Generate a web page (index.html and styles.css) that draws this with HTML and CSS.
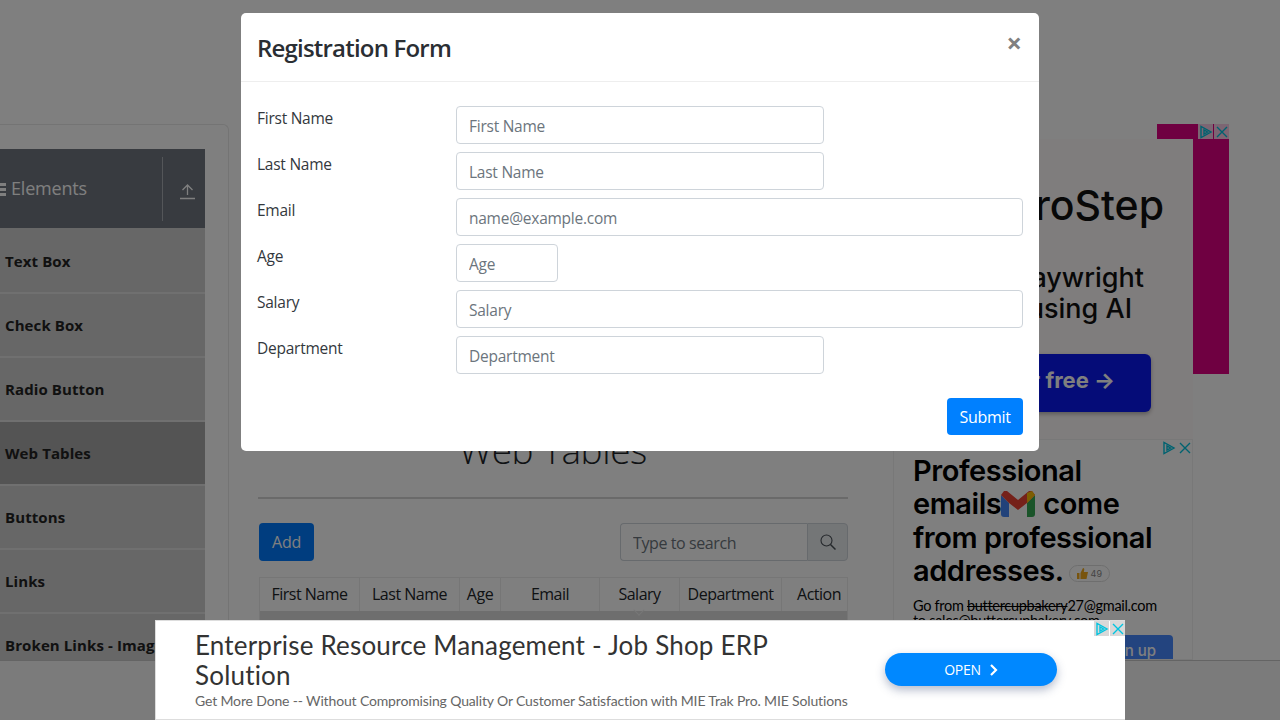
FILE: index.html
```html
<!DOCTYPE html>
<html lang="en">
<head>
    <meta charset="UTF-8">
    <title>Web Tables</title>
    <link rel="stylesheet" href="styles.css">
</head>
<body>
    <div class="page">
        <aside class="sidebar">
            <div class="group-header">
                <span class="group-title">
                    <span class="burger"><i></i><i></i><i></i></span>
                    Elements
                </span>
                <span class="group-toggle">
                    <svg width="17" height="17" viewBox="0 0 17 17" fill="none" stroke="currentColor" stroke-width="1.3">
                        <path d="M8.5 12V2M3.5 7l5-5 5 5M1 15.5h15"/>
                    </svg>
                </span>
            </div>
            <ul class="menu">
                <li>Text Box</li>
                <li>Check Box</li>
                <li>Radio Button</li>
                <li class="active">Web Tables</li>
                <li>Buttons</li>
                <li>Links</li>
                <li>Broken Links - Images</li>
            </ul>
        </aside>

        <main class="content">
            <h1 class="page-title">Web Tables</h1>
            <hr class="rule">
            <div class="toolbar">
                <button class="btn-add" type="button">Add</button>
                <div class="search">
                    <input class="search-input" type="text" placeholder="Type to search">
                    <span class="search-addon">
                        <svg width="16" height="16" viewBox="0 0 16 16" fill="none" stroke="currentColor" stroke-width="1.1">
                            <circle cx="6.5" cy="6.5" r="5.5"/>
                            <path d="M10.5 10.5l5 5" stroke-width="1.5"/>
                        </svg>
                    </span>
                </div>
            </div>
            <div class="table">
                <div class="table-head">
                    <div>First Name</div>
                    <div>Last Name</div>
                    <div>Age</div>
                    <div>Email</div>
                    <div class="sorted">Salary</div>
                    <div>Department</div>
                    <div class="action">Action</div>
                </div>
                <div class="table-row"></div>
            </div>
        </main>

        <section class="ads">
            <div class="ad-slot">
                <div class="ad-stripe"></div>
                <div class="ad-marks ad-marks-boxed">
                    <span class="mark"><svg width="14" height="14" viewBox="0 0 14 14" fill="none" stroke="#00c4e0" stroke-width="1.4"><path d="M2 1.5v11l10-5.5zM5 5v4l3.5-2z"/></svg></span>
                    <span class="mark"><svg width="14" height="14" viewBox="0 0 14 14" fill="none" stroke="#00c4e0" stroke-width="1.4"><path d="M2 2l10 10M12 2L2 12"/></svg></span>
                </div>
                <div class="ad-image">
                    <div class="ad-brand">MicroStep</div>
                    <div class="ad-copy">Test Playwright</div>
                    <div class="ad-copy ad-copy-short">flows using AI</div>
                    <div class="ad-cta">Try for free →</div>
                </div>
            </div>
            <div class="ad-mail">
                <div class="ad-marks ad-marks-plain">
                    <span class="mark"><svg width="14" height="14" viewBox="0 0 14 14" fill="none" stroke="#00c4e0" stroke-width="1.4"><path d="M2 1.5v11l10-5.5zM5 5v4l3.5-2z"/></svg></span>
                    <span class="mark"><svg width="14" height="14" viewBox="0 0 14 14" fill="none" stroke="#00c4e0" stroke-width="1.4"><path d="M2 2l10 10M12 2L2 12"/></svg></span>
                </div>
                <p class="mail-headline">
                    Professional<br>
                    emails<svg class="gmail" width="34" height="26" viewBox="0 0 34 26">
                        <path d="M0 4v19a3 3 0 0 0 3 3h5V12z" fill="#4285f4"/>
                        <path d="M34 4v19a3 3 0 0 1-3 3h-5V12z" fill="#34a853"/>
                        <path d="M0 4l8 8 9 7 9-7 8-8-3-4-3 0-11 9L6 0H3z" fill="#ea4335"/>
                        <path d="M26 2l5-2 3 4-8 8z" fill="#fbbc04"/>
                    </svg>come<br>
                    from professional<br>
                    addresses.<span class="likes">
                        <svg width="11" height="11" viewBox="0 0 11 11"><path d="M0 5h2.5v6H0zM3.5 5L6 0c1.200 0 1.500 1 1.200 2L6.800 4H11l-1.500 7h-6z" fill="#f0a81c"/></svg>
                        49
                    </span>
                </p>
                <p class="mail-text">Go from <s>buttercupbakery</s>27@gmail.com<br>to sales@buttercupbakery.com</p>
                <div class="mail-signup">Sign up</div>
            </div>
        </section>
    </div>

    <footer class="footer"></footer>

    <!-- Modal -->
    <div class="overlay">
        <div class="modal">
            <div class="modal-header">
                <h2 class="modal-title">Registration Form</h2>
                <span class="modal-close">×</span>
            </div>
            <form class="modal-body">
                <div class="form-row">
                    <label>First Name</label>
                    <input class="field field-md" type="text" placeholder="First Name">
                </div>
                <div class="form-row">
                    <label>Last Name</label>
                    <input class="field field-md" type="text" placeholder="Last Name">
                </div>
                <div class="form-row">
                    <label>Email</label>
                    <input class="field field-lg" type="text" placeholder="name@example.com">
                </div>
                <div class="form-row">
                    <label>Age</label>
                    <input class="field field-sm" type="text" placeholder="Age">
                </div>
                <div class="form-row">
                    <label>Salary</label>
                    <input class="field field-lg" type="text" placeholder="Salary">
                </div>
                <div class="form-row">
                    <label>Department</label>
                    <input class="field field-md" type="text" placeholder="Department">
                </div>
                <div class="form-actions">
                    <button class="btn-submit" type="button">Submit</button>
                </div>
            </form>
        </div>
    </div>

    <!-- Bottom ad -->
    <div class="bottom-ad">
        <div class="ad-marks ad-marks-light">
            <span class="mark"><svg width="14" height="14" viewBox="0 0 14 14" fill="none" stroke="#00c4e0" stroke-width="1.4"><path d="M2 1.500v11l10-5.500zM5 5v4l3.500-2z"/></svg></span>
            <span class="mark"><svg width="14" height="14" viewBox="0 0 14 14" fill="none" stroke="#00c4e0" stroke-width="1.4"><path d="M2 2l10 10M12 2L2 12"/></svg></span>
        </div>
        <div class="bottom-ad-text">
            <div class="bottom-ad-title">Enterprise Resource Management - Job Shop ERP Solution</div>
            <div class="bottom-ad-sub">Get More Done -- Without Compromising Quality Or Customer Satisfaction with MIE Trak Pro. MIE Solutions</div>
        </div>
        <div class="bottom-ad-open">
            OPEN
            <svg width="9" height="12" viewBox="0 0 9 12" fill="none" stroke="#fff" stroke-width="2.200"><path d="M2 1l5 5-5 5"/></svg>
        </div>
    </div>
</body>
</html>
```

FILE: styles.css
```css
* {
    box-sizing: border-box;
}

body {
    margin: 0;
    height: 720px;
    overflow: hidden;
    display: flex;
    flex-direction: column;
    background: #fff;
    color: #212529;
    font-family: "Open Sans", "Noto Sans", sans-serif;
    font-size: 16px;
}

.page {
    flex: 1;
    min-height: 0;
    overflow: hidden;
    display: flex;
    padding-top: 124px;
}

.footer {
    height: 60px;
    background: #f6f6f6;
    border-top: 1px solid #c8c8c8;
}

/* Left menu */
.sidebar {
    flex: none;
    width: 229px;
    height: 560px;
    padding: 24px 23px 0 0;
    border: 1px solid #e8e8e8;
    border-left: 0;
    border-bottom: 0;
    border-radius: 0 6px 0 0;
}

.group-header {
    height: 81px;
    display: flex;
    align-items: center;
    justify-content: space-between;
    background: #707680;
    color: #fff;
    border-bottom: 2px solid #d0d0d0;
}

.group-title {
    display: flex;
    align-items: center;
    gap: 5px;
    font-size: 18px;
    letter-spacing: -0.2px;
    padding-bottom: 2px;
}

.burger {
    display: flex;
    flex-direction: column;
    gap: 2px;
    width: 6px;
    margin-top: 3px;
}

.burger i {
    height: 3px;
    background: #fff;
}

.group-toggle {
    display: flex;
    align-items: center;
    justify-content: center;
    width: 43px;
    height: 64px;
    border-left: 1px solid #a8acb3;
    padding-top: 6px;
    padding-left: 6px;
}

.menu {
    list-style: none;
    margin: 0;
    padding: 0;
}

.menu li {
    height: 64px;
    padding-left: 5px;
    display: flex;
    align-items: center;
    background: #cecece;
    border-bottom: 2px solid #e0e0e0;
    font-size: 15px;
    font-weight: 700;
    letter-spacing: 0.1px;
    white-space: nowrap;
    overflow: hidden;
    color: #222;
}

.menu li.active {
    background: #a8a8a8;
}

/* Center column */
.content {
    flex: none;
    width: 636px;
    margin-left: 12px;
    padding: 302px 29px 0 17px;
}

.page-title {
    margin: 0;
    height: 48px;
    line-height: 48px;
    text-align: center;
    font-size: 37px;
    font-weight: 300;
    letter-spacing: -0.4px;
}

.rule {
    margin: 23px 0 24px;
    border: 0;
    border-top: 2px solid #d4d4d4;
}

.toolbar {
    display: flex;
    justify-content: space-between;
    padding-left: 1px;
}

.btn-add {
    width: 55px;
    height: 38px;
    border: 0;
    border-radius: 4px;
    background: #007bff;
    color: #fff;
    font: inherit;
    letter-spacing: -0.3px;
}

.search {
    display: flex;
    width: 228px;
    height: 38px;
}

.search-input {
    flex: 1;
    min-width: 0;
    padding: 2px 12px 0;
    border: 1px solid #ced4da;
    border-right: 0;
    border-radius: 4px 0 0 4px;
    background: #fff;
    font: inherit;
    letter-spacing: -0.4px;
}

.search-input::placeholder,
.field::placeholder {
    color: #6c757d;
    opacity: 1;
}

.search-addon {
    width: 41px;
    display: flex;
    align-items: center;
    justify-content: center;
    background: #e9ecef;
    border: 1px solid #ced4da;
    border-radius: 0 4px 4px 0;
    color: #495057;
}

.table {
    margin: 16px 0 0 1px;
    border: 1px solid #ececec;
    border-bottom: 0;
}

.table-head {
    display: grid;
    grid-template-columns: 100px 100px 41px 99px 80px 102px 66px;
    height: 33px;
}

.table-head div {
    position: relative;
    display: flex;
    align-items: center;
    justify-content: center;
    padding-bottom: 2px;
    border-right: 1px solid #ececec;
    letter-spacing: -0.5px;
    white-space: nowrap;
}

.table-head .action {
    border-right: 0;
    padding-left: 8px;
}

.table-head .sorted::after {
    content: "";
    position: absolute;
    z-index: 1;
    left: 35px;
    bottom: -3px;
    width: 7px;
    height: 7px;
    border-right: 1px solid #eee;
    border-bottom: 1px solid #eee;
    transform: rotate(45deg);
}

.table-row {
    height: 40px;
    background: #dcdcdc;
}

/* Right ads */
.ads {
    flex: none;
    width: 336px;
    margin-left: 16px;
}

.ad-slot {
    position: relative;
    height: 315px;
}

.ad-stripe {
    position: absolute;
    top: 0;
    right: 0;
    width: 72px;
    height: 250px;
    background: #de0082;
}

.ad-marks {
    position: absolute;
    top: 0;
    right: 0;
    z-index: 2;
    display: flex;
    gap: 1px;
}

.mark {
    width: 15px;
    height: 15px;
    display: flex;
    align-items: center;
    justify-content: center;
}

.ad-marks-boxed .mark {
    background: rgba(255, 255, 255, 0.8);
}

.ad-marks-light .mark {
    background: #d8d8d8;
}

.ad-image {
    position: relative;
    width: 300px;
    height: 300px;
    top: 15px;
    padding-top: 41px;
    background: #fffafa;
    display: flex;
    flex-direction: column;
    align-items: flex-end;
    color: #111;
}

.ad-brand {
    margin-right: 29px;
    font-family: Inter, sans-serif;
    font-size: 41px;
    line-height: 50px;
    font-weight: 500;
    white-space: nowrap;
}

.ad-copy {
    margin: 32px 49px 0 0;
    font-family: Inter, sans-serif;
    font-size: 27px;
    line-height: 31px;
    font-weight: 500;
    white-space: nowrap;
}

.ad-copy-short {
    margin: 0 61px 0 0;
}

.ad-cta {
    width: 240px;
    height: 58px;
    margin: 30px 42px 0 0;
    padding: 0 36px 6px 0;
    display: flex;
    align-items: center;
    justify-content: flex-end;
    border-radius: 6px;
    background: #0a18f0;
    box-shadow: 0 2px 4px rgba(0, 0, 0, 0.3);
    color: #fff;
    font-family: Inter, sans-serif;
    font-size: 22px;
    font-weight: 700;
}

.ad-mail {
    position: relative;
    width: 300px;
    height: 221px;
    overflow: hidden;
    padding: 14px 0 0 19px;
    background: #fff;
    border: 1px solid #f0f0f0;
    color: #000;
    font-family: Inter, sans-serif;
}

.ad-marks-plain {
    top: 0;
    right: 0;
}

.mail-headline {
    margin: 0;
    font-size: 29px;
    line-height: 33.300px;
    font-weight: 600;
    letter-spacing: -0.45px;
    white-space: nowrap;
}

.gmail {
    margin: 0 8px 0 0;
    vertical-align: -3px;
}

.likes {
    display: inline-flex;
    align-items: center;
    gap: 3px;
    margin-left: 5px;
    padding: 0 7px;
    height: 17px;
    border: 1px solid #ddd;
    border-radius: 9px;
    font-size: 9px;
    font-weight: 400;
    letter-spacing: 0;
    color: #888;
    vertical-align: 2px;
}

.mail-text {
    margin: 11px 0 0;
    font-family: Lato, sans-serif;
    font-size: 14.500px;
    line-height: 15px;
    letter-spacing: -0.3px;
    white-space: nowrap;
}

.mail-signup {
    position: absolute;
    right: 19px;
    bottom: 0;
    width: 150px;
    height: 24px;
    padding: 6px 17px 0 0;
    border-radius: 4px 4px 0 0;
    background: #4688ff;
    color: #fff;
    text-align: right;
    font-size: 15px;
    font-weight: 500;
}

/* Modal */
.overlay {
    position: fixed;
    top: 0;
    left: 0;
    width: 1280px;
    height: 720px;
    z-index: 10;
    display: flex;
    justify-content: center;
    padding-top: 13px;
    background: rgba(0, 0, 0, 0.5);
}

.modal {
    width: 798px;
    height: 438px;
    background: #fff;
    border-radius: 5px;
}

.modal-header {
    height: 69px;
    display: flex;
    justify-content: space-between;
    padding: 16px 17px 0 16px;
    border-bottom: 1px solid #eee;
}

.modal-title {
    margin: 0;
    font-size: 24px;
    line-height: 37px;
    font-weight: 600;
    letter-spacing: -0.8px;
    color: #2a2e33;
}

.modal-close {
    font-size: 27px;
    font-weight: 700;
    line-height: 28px;
    color: #808080;
}

.modal-body {
    padding: 24px 16px 16px;
}

.form-row {
    display: flex;
    align-items: flex-start;
    height: 38px;
    margin-bottom: 8px;
}

.form-row label {
    width: 199px;
    font-size: 15.500px;
    line-height: 24px;
    letter-spacing: -0.25px;
    color: #33383d;
}

.field {
    height: 38px;
    padding: 1px 12px 0;
    border: 1px solid #ced4da;
    border-radius: 4px;
    font: inherit;
    font-size: 15.500px;
    letter-spacing: -0.25px;
}

.field-sm {
    width: 102px;
}

.field-md {
    width: 368px;
}

.field-lg {
    width: 567px;
}

.form-actions {
    display: flex;
    justify-content: flex-end;
    margin-top: 24px;
}

.btn-submit {
    width: 76px;
    height: 37px;
    border: 0;
    border-radius: 4px;
    background: #0080ff;
    color: #fff;
    font: inherit;
    letter-spacing: -0.3px;
}

/* Bottom ad */
.bottom-ad {
    position: fixed;
    left: 155px;
    bottom: 0;
    z-index: 20;
    width: 970px;
    height: 100px;
    display: flex;
    background: #fff;
    border-top: 1px solid #ddd;
    border-bottom: 1px solid #ddd;
    border-left: 1px solid #ddd;
}

.bottom-ad-text {
    width: 620px;
    margin-left: 39px;
    padding-top: 9px;
}

.bottom-ad-title {
    font-family: Lato, sans-serif;
    font-size: 26px;
    line-height: 30px;
    letter-spacing: 0.19px;
    color: #333;
}

.bottom-ad-sub {
    margin-top: 1px;
    font-family: Lato, sans-serif;
    font-size: 14px;
    line-height: 20px;
    letter-spacing: -0.15px;
    color: #666;
    white-space: nowrap;
}

.bottom-ad-open {
    align-self: flex-start;
    width: 172px;
    height: 33px;
    margin: 32px 0 0 70px;
    display: flex;
    align-items: center;
    justify-content: center;
    gap: 8px;
    border-radius: 17px;
    background: #0088ff;
    box-shadow: 0 4px 10px rgba(40, 60, 110, 0.35);
    color: #fff;
    font-size: 14px;
    letter-spacing: -0.3px;
}
```
